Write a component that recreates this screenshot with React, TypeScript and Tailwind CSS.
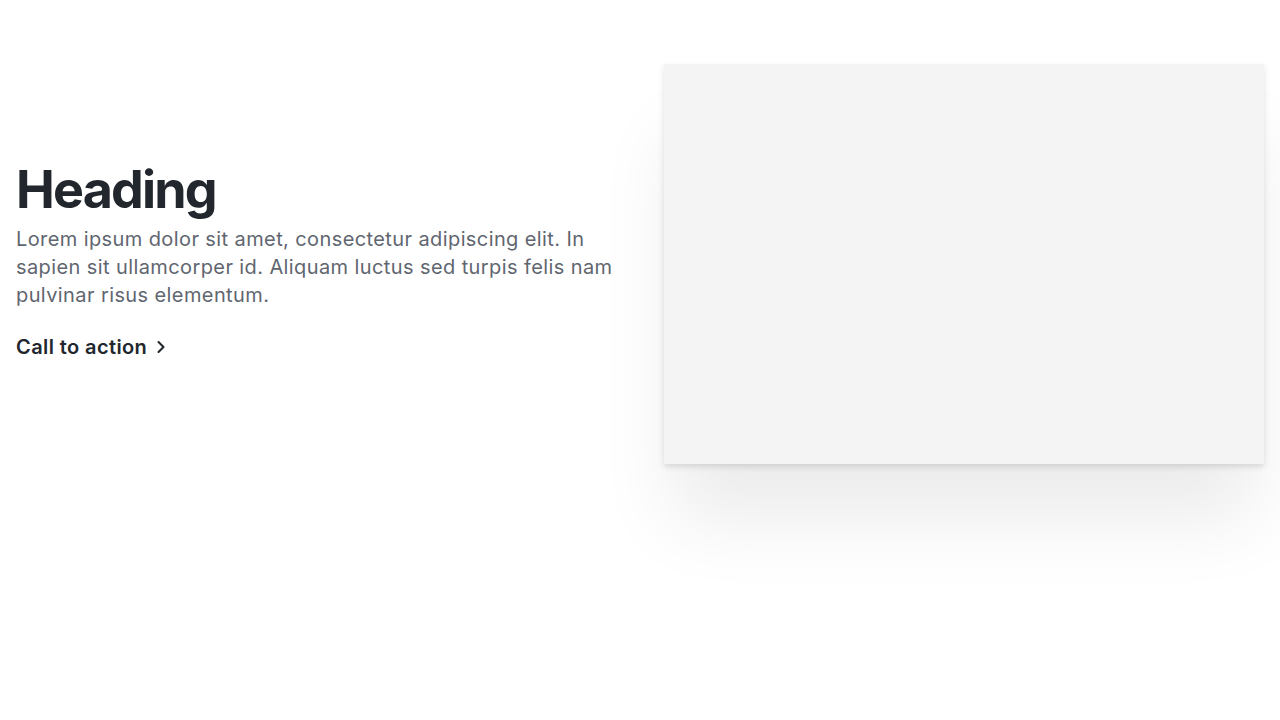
import { ChevronRight } from 'lucide-react';

export default function App() {
    return (
        <div
            className="w-full min-h-[720px] bg-white px-4 pt-16"
            style={{ fontFamily: 'Inter, "Noto Sans", sans-serif' }}
        >
            <div className="grid grid-cols-2 gap-12 items-center">
                <div className="flex flex-col pb-2">
                    <h1 className="text-[52px] leading-[62px] font-bold tracking-[-0.035em] text-[#22272e]">
                        Heading
                    </h1>
                    <p className="mt-1 text-xl leading-7 tracking-[0.02em] text-[#5f6670]">
                        Lorem ipsum dolor sit amet, consectetur adipiscing
                        elit. In sapien sit ullamcorper id. Aliquam luctus sed
                        turpis felis nam pulvinar risus elementum.
                    </p>
                    <a
                        href="#"
                        className="mt-6 flex items-center gap-1 text-xl leading-7 font-semibold tracking-[0.02em] text-[#22272e]"
                    >
                        Call to action
                        <ChevronRight className="w-5 h-5" strokeWidth={2.5} />
                    </a>
                </div>
                <div className="h-[400px] bg-[#f4f4f4] shadow-[0_3px_6px_rgba(0,0,0,0.12),0_64px_72px_-8px_rgba(0,0,0,0.08)]" />
            </div>
        </div>
    );
}
